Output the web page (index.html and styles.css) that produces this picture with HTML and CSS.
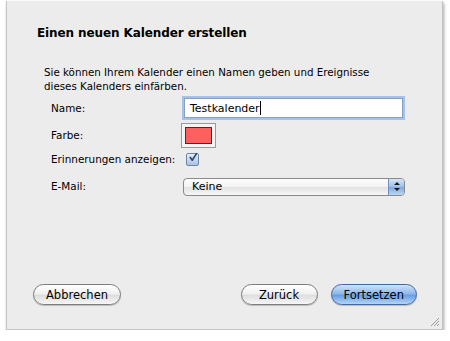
FILE: index.html
```html
<!DOCTYPE html>
<html lang="de">
<head>
  <meta charset="UTF-8">
  <title>Neuer Kalender</title>
  <link rel="stylesheet" href="styles.css">
</head>
<body>
  <!-- Dialog window -->
  <div class="sheet">
    <h1>Einen neuen Kalender erstellen</h1>

    <p class="intro">Sie können Ihrem Kalender einen Namen geben und Ereignisse dieses Kalenders einfärben.</p>

    <!-- Form rows -->
    <div class="form">
      <label>Name:</label>
      <div class="field"><span>Testkalender</span><span class="caret"></span></div>

      <label>Farbe:</label>
      <div class="well"><div class="swatch"></div></div>

      <label>Erinnerungen anzeigen:</label>
      <div class="check">
        <svg width="13" height="13" viewBox="0 0 13 13">
          <path d="M3 6.5 L5.5 10 L11 1.5" fill="none" stroke="#2c4a6e" stroke-width="2.2" stroke-linecap="round" stroke-linejoin="round"/>
        </svg>
      </div>

      <label>E-Mail:</label>
      <div class="popup">
        <span class="popup-text">Keine</span>
        <span class="popup-arrows">
          <svg width="8" height="11" viewBox="0 0 8 11">
            <path d="M1 4 L4 1 L7 4 Z M1 7 L4 10 L7 7 Z" fill="#1a1a1a"/>
          </svg>
        </span>
      </div>
    </div>

    <!-- Buttons -->
    <div class="buttons">
      <button class="btn">Abbrechen</button>
      <div class="right">
        <button class="btn">Zurück</button>
        <button class="btn primary">Fortsetzen</button>
      </div>
    </div>

    <svg class="grip" width="12" height="12" viewBox="0 0 12 12">
      <path d="M11 3 L3 11 M11 6 L6 11 M11 9 L9 11" stroke="#999" stroke-width="1"/>
    </svg>
  </div>
</body>
</html>
```

FILE: styles.css
```css
* {
  box-sizing: border-box;
}

body {
  margin: 0;
  background-color: #fff;
  font-family: "DejaVu Sans", Verdana, sans-serif;
  font-size: 11px;
  color: #000;
}

.sheet {
  position: relative;
  width: 437px;
  height: 329px;
  margin: 1px 0 0 6px;
  background-color: #ececec;
  border: 1px solid #c4c4c4;
  border-top: none;
  box-shadow: 1px 2px 3px rgba(0, 0, 0, 0.35);
  padding: 25px 0 0 30px;
}

h1 {
  margin: 0 0 24px 0;
  height: 15px;
  line-height: 15px;
  font-size: 12px;
  font-weight: bold;
  letter-spacing: -0.1px;
}

.intro {
  margin: 0 0 3px 7px;
  width: 350px;
  line-height: 14px;
  font-size: 10.3px;
}

/* Form */
.form {
  display: grid;
  grid-template-columns: 131px 223px;
  grid-template-rows: 24px 30px 18px 36px;
  margin-left: 14px;
  align-items: center;
}

.form label {
  font-size: 10.4px;
}

.field {
  height: 20px;
  background-color: #fff;
  border: 1px solid #8a9fbe;
  box-shadow: 0 0 0 2px #a4c2ea;
  margin: 0 2px;
  padding: 2px 5px;
  display: flex;
  align-items: center;
  font-size: 11px;
}

.caret {
  width: 1px;
  height: 14px;
  background-color: #000;
}

.well {
  width: 35px;
  height: 25px;
  border: 1px solid #9a9a9a;
  background-color: #f4f4f4;
  padding: 3px;
  margin-left: -1px;
}

.swatch {
  width: 100%;
  height: 100%;
  background-color: #ff5f5f;
  border: 1px solid #5a2525;
}

.check {
  width: 13px;
  height: 13px;
  margin-left: 4px;
  border: 1px solid #6d86a8;
  border-radius: 2px;
  background: linear-gradient(#e6eef8, #a9c2e2);
  display: flex;
  align-items: center;
  justify-content: center;
}

.check svg {
  margin: -3px 0 0 1px;
}

.popup {
  display: flex;
  height: 18px;
  margin: 1px 0 0 1px;
  border: 1px solid #8a8a8a;
  border-radius: 4px;
  overflow: hidden;
  background: linear-gradient(#fdfdfd, #f2f2f2 50%, #e2e2e2 51%, #f6f6f6);
}

.popup-text {
  flex: 1;
  padding-left: 8px;
  line-height: 16px;
  font-size: 11px;
}

.popup-arrows {
  width: 16px;
  display: flex;
  align-items: center;
  justify-content: center;
  border-left: 1px solid #6f8fbd;
  background: linear-gradient(#d5e5f8, #9fc0ea 50%, #7fa8de 51%, #bcd6f4);
}

/* Buttons */
.buttons {
  position: absolute;
  left: 26px;
  right: 25px;
  top: 283px;
  display: flex;
  justify-content: space-between;
}

.right {
  display: flex;
  gap: 13px;
}

.btn {
  height: 21px;
  padding: 0 12px;
  border: 1px solid #7c7c7c;
  border-radius: 11px;
  background: linear-gradient(#ffffff, #f1f1f1 45%, #dedede 55%, #f6f6f6);
  box-shadow: 0 1px 1px rgba(0, 0, 0, 0.2);
  font-family: "DejaVu Sans", Verdana, sans-serif;
  font-size: 11.5px;
  color: #000;
}

.btn:first-child {
  min-width: 85px;
}

.right .btn:first-child {
  min-width: 77px;
}

.primary {
  min-width: 86px;
  border-color: #43689b;
  background: linear-gradient(#cfe2f8, #8fb9ec 45%, #6a9fe2 55%, #b4d4f7);
}

.grip {
  position: absolute;
  right: 2px;
  bottom: 2px;
}
```
